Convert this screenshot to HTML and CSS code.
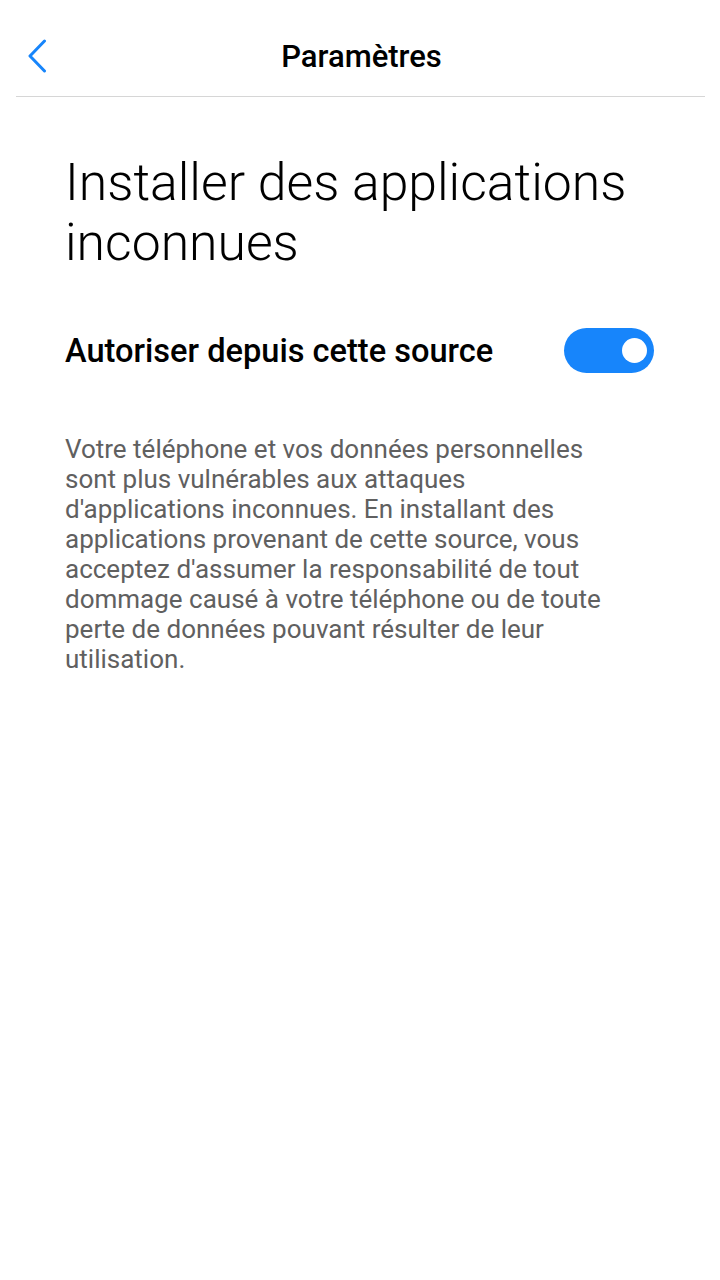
FILE: index.html
```html
<!DOCTYPE html>
<html lang="fr">

<head>
  <meta charset="UTF-8" />
  <meta name="viewport" content="width=device-width, initial-scale=1.0" />
  <title>Paramètres</title>
  <link rel="stylesheet" href="styles.css">
</head>

<body>
  <header class="topbar">
    <button class="back" aria-label="Retour">
      <svg width="22" height="34" viewBox="0 0 22 34">
        <path d="M18.5 2 L4 17 L18.5 32" fill="none" stroke="#1785fb" stroke-width="3" stroke-linecap="round" stroke-linejoin="round" />
      </svg>
    </button>
    <h1 class="topbar-title">Paramètres</h1>
  </header>

  <main class="content">
    <h2 class="page-title">Installer des applications inconnues</h2>

    <div class="setting-row">
      <span class="setting-label">Autoriser depuis cette source</span>
      <span class="switch on"><span class="knob"></span></span>
    </div>

    <p class="warning">Votre téléphone et vos données personnelles sont plus vulnérables aux attaques d'applications inconnues. En installant des applications provenant de cette source, vous acceptez d'assumer la responsabilité de tout dommage causé à votre téléphone ou de toute perte de données pouvant résulter de leur utilisation.</p>
  </main>
</body>

</html>
```

FILE: styles.css
```css
* {
  margin: 0;
  padding: 0;
  box-sizing: border-box;
}

html,
body {
  font-family: Roboto, 'Noto Sans', sans-serif;
  background: #ffffff;
  color: #000;
  height: 100%;
}

.topbar {
  display: flex;
  align-items: center;
  justify-content: center;
  position: relative;
  height: 97px;
  padding-top: 17px;
  margin: 0 15px 0 16px;
  border-bottom: 1px solid #d6d6d6;
}

.back {
  position: absolute;
  left: 10px;
  top: 39px;
  background: none;
  border: none;
  display: flex;
}

.topbar-title {
  font-size: 31px;
  font-weight: 500;
  margin-left: 2px;
}

.content {
  padding: 0 66px 0 65px;
}

.page-title {
  font-size: 51.7px;
  font-weight: 300;
  line-height: 60px;
  margin-top: 56px;
}

.setting-row {
  display: flex;
  align-items: center;
  justify-content: space-between;
  margin-top: 55px;
}

.setting-label {
  font-size: 32.6px;
  font-weight: 500;
}

.switch {
  width: 90px;
  height: 45px;
  border-radius: 23px;
  background: #1785fb;
  display: flex;
  align-items: center;
  justify-content: flex-end;
  padding-right: 7px;
}

.knob {
  width: 25px;
  height: 25px;
  border-radius: 50%;
  background: #fff;
}

.warning {
  margin-top: 61px;
  max-width: 555px;
  font-size: 26px;
  line-height: 30px;
  color: #606060;
}
```
